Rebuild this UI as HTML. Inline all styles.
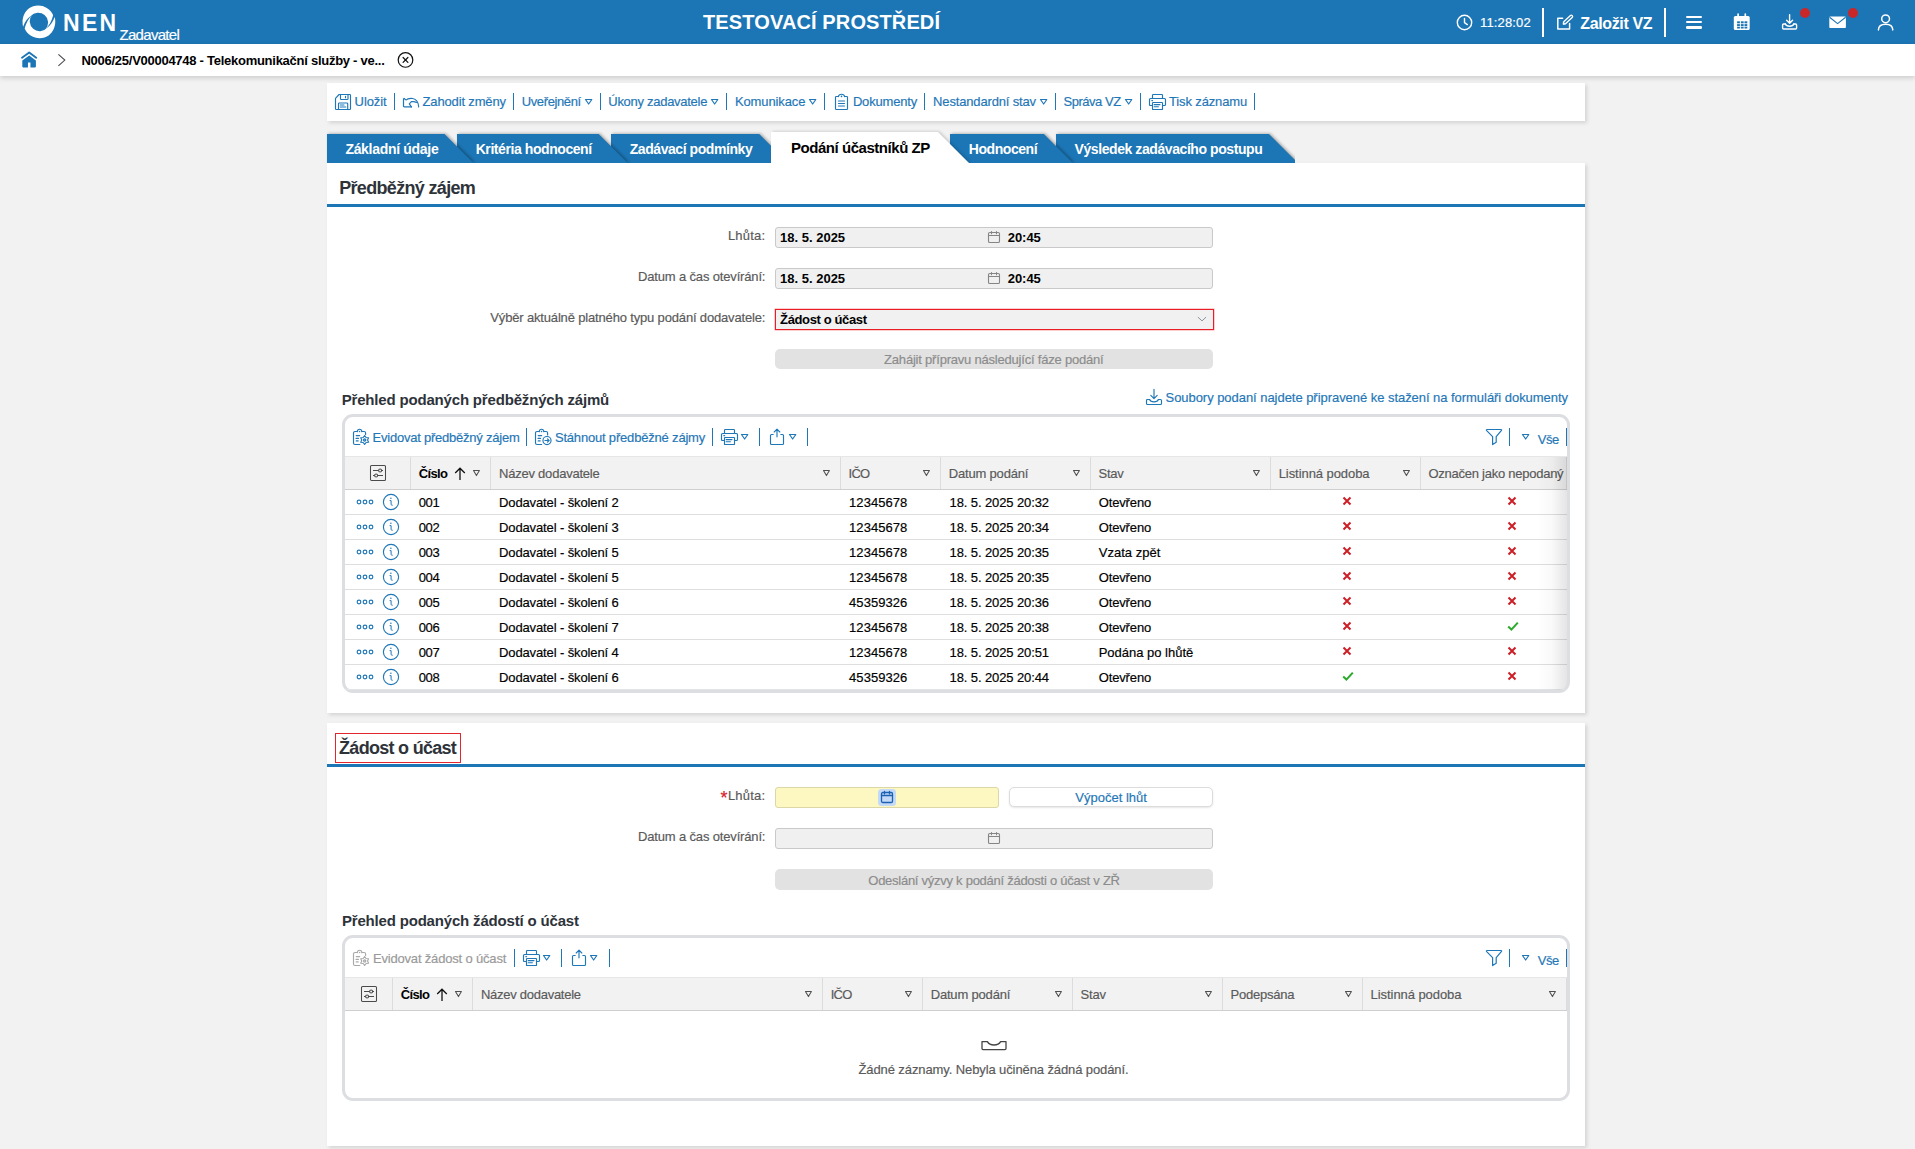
<!DOCTYPE html>
<html lang="cs"><head><meta charset="utf-8"><title>NEN - Zadavatel</title>
<style>
html,body{margin:0;padding:0}
body{width:1915px;height:1149px;overflow:hidden;position:relative;background:#f2f2f2;font-family:"Liberation Sans", sans-serif;font-size:13px;color:#000}
.b{position:absolute;display:block;box-sizing:border-box}
.t{position:absolute;white-space:nowrap;display:block}
</style></head><body>
<header>
<div class="b" style="left:0px;top:0px;width:1915px;height:44px;background:#1c75b4;"></div>
<svg class="b" style="left:22px;top:5px;" width="34" height="34" viewBox="22 5 34 34"><path d="M23.1 26.8 C21.4 20 23.6 12.6 28.8 8.6 C34 4.6 41.6 4.7 46.8 8 C49.8 9.9 52.2 12.4 53.1 15.3 Q51.4 23.2 45.7 28.9 A9.1 9.1 0 1 0 30.7 16.1 Q25.7 19.35 23.1 26.8Z" fill="#fff"/><path d="M23.1 26.8 C21.4 20 23.6 12.6 28.8 8.6 C34 4.6 41.6 4.7 46.8 8 C49.8 9.9 52.2 12.4 53.1 15.3 Q51.4 23.2 45.7 28.9 A9.1 9.1 0 1 0 30.7 16.1 Q25.7 19.35 23.1 26.8Z" fill="#fff" transform="rotate(180 38.9 21.9)"/></svg>
<span id="t1" class="t" style="left:63.10px;top:9.01px;font-size:23px;line-height:28px;font-weight:700;color:#fff;letter-spacing:2.213px;">NEN</span>
<span id="t2" class="t" style="left:119.50px;top:26.00px;font-size:15px;line-height:18px;-webkit-text-stroke:0.18px;color:#fff;letter-spacing:-0.697px;">Zadavatel</span>
<span id="t3" class="t" style="left:703.00px;top:10.00px;font-size:20px;line-height:24px;font-weight:700;color:#fff;letter-spacing:0.119px;">TESTOVACÍ PROSTŘEDÍ</span>
<svg class="b" style="left:1456px;top:14px;" width="17" height="17" viewBox="0 0 17 17"><g fill="none" stroke="#fff" stroke-width="1.4" stroke-linecap="round" stroke-linejoin="round"><circle cx="8.5" cy="8.5" r="7.2"/><path d="M8.5 4.4V8.7L11.3 10.6"/></g></svg>
<span id="t4" class="t" style="left:1480.00px;top:14.01px;font-size:13px;line-height:18px;-webkit-text-stroke:0.18px;color:#fff;letter-spacing:0.145px;">11:28:02</span>
<div class="b" style="left:1542px;top:8px;width:2px;height:29px;background:#fff;"></div>
<svg class="b" style="left:1555.5px;top:13px;overflow:visible;" width="18" height="18" viewBox="0 0 18 18"><path d="M6.6 5.2H1.8V16H13.6V10.6" fill="none" stroke="#fff" stroke-width="1.5" stroke-linejoin="round" stroke-linecap="round"/><path d="M7 11.4L7.5 8.9L9.5 10.9Z" fill="#fff" stroke="#fff" stroke-width="0.8" stroke-linejoin="round"/><path d="M8.9 9.5L15.3 3.5" stroke="#fff" stroke-width="3.9" stroke-linecap="round"/><path d="M8.9 9.5L15.3 3.5" stroke="#1c75b4" stroke-width="1.2" stroke-linecap="round"/></svg>
<span id="t5" class="t" style="left:1580.30px;top:14.01px;font-size:16px;line-height:20px;font-weight:700;color:#fff;letter-spacing:-0.376px;">Založit VZ</span>
<div class="b" style="left:1664px;top:8px;width:2px;height:29px;background:#fff;"></div>
<div class="b" style="left:1686px;top:15.8px;width:16px;height:2.6px;background:#fff;border-radius:1.2px;"></div>
<div class="b" style="left:1686px;top:20.9px;width:16px;height:2.6px;background:#fff;border-radius:1.2px;"></div>
<div class="b" style="left:1686px;top:26px;width:16px;height:2.6px;background:#fff;border-radius:1.2px;"></div>
<svg class="b" style="left:1733px;top:13px;" width="18" height="18" viewBox="0 0 18 18"><rect x="0.8" y="3" width="15.9" height="14" rx="1.6" fill="#fff"/><path d="M5.1 1V4.4M12.3 1V4.4" stroke="#fff" stroke-width="1.7" stroke-linecap="round"/><g fill="#1c75b4"><rect x="4.1" y="8.3" width="2.8" height="2"/><rect x="4.1" y="11.1" width="2.8" height="1.9"/><rect x="4.1" y="13.7" width="2.8" height="1.8"/><rect x="7.85" y="8.3" width="2.8" height="2"/><rect x="7.85" y="11.1" width="2.8" height="1.9"/><rect x="7.85" y="13.7" width="2.8" height="1.8"/><rect x="11.5" y="8.3" width="2.8" height="2"/><rect x="11.5" y="11.1" width="2.8" height="1.9"/><rect x="11.5" y="13.7" width="2.8" height="1.8"/></g></svg>
<svg class="b" style="left:1781px;top:13px;" width="18" height="18" viewBox="0 0 18 18"><g fill="none" stroke="#fff" stroke-width="1.4" stroke-linejoin="round" stroke-linecap="round"><path d="M8.6 1.6V10M5.6 7.2L8.6 10.2L11.6 7.2"/><path d="M4.4 11H2.6Q1.6 11 1.6 12V15Q1.6 16 2.6 16H14.6Q15.6 16 15.6 15V12Q15.6 11 14.6 11H12.8"/><path d="M4.4 11Q5.2 13.2 8.6 13.2Q12 13.2 12.8 11"/></g></svg>
<div class="b" style="left:1800px;top:8.4px;width:10px;height:10px;background:#ca272b;border-radius:50%;"></div>
<svg class="b" style="left:1829px;top:16px;" width="18" height="13" viewBox="0 0 18 13"><rect x="0.3" y="0.5" width="16.6" height="11.6" rx="1.2" fill="#fff"/><path d="M0.6 1.2L8.6 7.6L16.6 1.2" fill="none" stroke="#1c75b4" stroke-width="1.1"/></svg>
<div class="b" style="left:1848px;top:8.4px;width:10px;height:10px;background:#ca272b;border-radius:50%;"></div>
<svg class="b" style="left:1877px;top:13px;" width="18" height="18" viewBox="0 0 18 18"><g fill="none" stroke="#fff" stroke-width="1.5" stroke-linecap="round"><circle cx="8.6" cy="5.8" r="3.9"/><path d="M1.4 16.9Q1.6 11.2 8.6 11.2Q15.6 11.2 15.8 16.9"/></g></svg>
</header>
<nav aria-label="breadcrumb">
<div class="b" style="left:0px;top:44px;width:1915px;height:32px;background:#fff;box-shadow:0 2px 5px rgba(0,0,0,.16);"></div>
<svg class="b" style="left:20px;top:51px;overflow:visible;" width="18" height="18" viewBox="0 0 18 18"><path d="M2 6.7L9.2 1.5L16.2 6.7" fill="none" stroke="#1c75b4" stroke-width="1.9" stroke-linecap="round" stroke-linejoin="round"/><path d="M9.2 4.5L15.9 9.5V15.6Q15.9 16.4 15.1 16.4H10.45V11.4H7.95V16.4H3.1Q2.3 16.4 2.3 15.6V9.5Z" fill="#1c75b4"/></svg>
<svg class="b" style="left:57px;top:53px;" width="10" height="14" viewBox="0 0 10 14"><path d="M1.4 1.3L7.8 7.1L1.4 12.9" fill="none" stroke="#4a4a52" stroke-width="1.1"/></svg>
<span id="t6" class="t" style="left:81.50px;top:52.01px;font-size:13px;line-height:17px;font-weight:700;letter-spacing:-0.265px;">N006/25/V00004748 - Telekomunikační služby - ve...</span>
<svg class="b" style="left:396px;top:51px;overflow:visible;" width="18" height="18" viewBox="0 0 18 18"><g fill="none" stroke="#111" stroke-width="1.2" stroke-linecap="round"><circle cx="9.5" cy="8.95" r="7.3"/><path d="M7.1 6.5L11.9 11.4M11.9 6.5L7.1 11.4"/></g></svg>
</nav>
<main>
<div role="toolbar">
<div class="b" style="left:327px;top:83px;width:1258px;height:38px;background:#fff;box-shadow:2px 2px 4px rgba(0,0,0,.13);"></div>
<svg class="b" style="left:334px;top:93px;overflow:visible;" width="18" height="18" viewBox="0 0 18 18"><g fill="none" stroke="#1f77b7" stroke-width="1.15" stroke-linejoin="round" stroke-linecap="round"><path d="M1.5 5.3L5.1 1.5H15.7Q16.5 1.5 16.5 2.3V15.7Q16.5 16.5 15.7 16.5H2.3Q1.5 16.5 1.5 15.7Z"/><path d="M6.5 1.7V5.7Q6.5 6.5 7.3 6.5H13.2Q14 6.5 14 5.7V1.7M11.5 3.4V4.7"/><path d="M4.5 16.3V10.8Q4.5 10 5.3 10H12.9Q13.7 10 13.7 10.8V16.3"/><path d="M6.3 12H10M6.3 14H11.8"/></g></svg>
<span id="t7" class="t" style="left:354.60px;top:93.01px;font-size:13px;line-height:17px;-webkit-text-stroke:0.18px;color:#1f77b7;letter-spacing:-0.086px;">Uložit</span>
<div class="b" style="left:394px;top:93px;width:1.25px;height:17px;background:#1f77b7;"></div>
<svg class="b" style="left:402px;top:93px;overflow:visible;" width="18" height="18" viewBox="0 0 18 18"><g fill="none" stroke="#1f77b7" stroke-width="1.2" stroke-linejoin="round" stroke-linecap="round"><path d="M9.4 13.9H2.4Q1.5 13.9 1.5 13V6.3Q1.5 5.3 2.4 5.5Q3.1 6.9 4.2 6.9Q5.2 6.9 5.8 5.8Q8.4 5.2 10.6 5.5C14.6 6.2 16.4 9.6 16.7 13.9"/><path d="M9.4 13.9L7.3 10.9L9.4 8.7Q12.4 8.2 14.4 9.4"/></g></svg>
<span id="t8" class="t" style="left:422.50px;top:93.01px;font-size:13px;line-height:17px;-webkit-text-stroke:0.18px;color:#1f77b7;letter-spacing:-0.144px;">Zahodit změny</span>
<div class="b" style="left:513px;top:93px;width:1.25px;height:17px;background:#1f77b7;"></div>
<span id="t9" class="t" style="left:521.70px;top:93.01px;font-size:13px;line-height:17px;-webkit-text-stroke:0.18px;color:#1f77b7;letter-spacing:-0.377px;">Uveřejnění</span>
<svg class="b" style="left:584px;top:98px;overflow:visible;" width="12" height="12" viewBox="0 0 12 12"><path d="M1.5 1.5H7.8 L4.65 6Z" fill="none" stroke="#1f77b7" stroke-width="1.2" stroke-linejoin="round"/></svg>
<div class="b" style="left:600px;top:93px;width:1.25px;height:17px;background:#1f77b7;"></div>
<span id="t10" class="t" style="left:608.30px;top:93.01px;font-size:13px;line-height:17px;-webkit-text-stroke:0.18px;color:#1f77b7;letter-spacing:-0.284px;">Úkony zadavatele</span>
<svg class="b" style="left:710px;top:98px;overflow:visible;" width="12" height="12" viewBox="0 0 12 12"><path d="M1.5 1.5H7.8 L4.65 6Z" fill="none" stroke="#1f77b7" stroke-width="1.2" stroke-linejoin="round"/></svg>
<div class="b" style="left:726px;top:93px;width:1.25px;height:17px;background:#1f77b7;"></div>
<span id="t11" class="t" style="left:734.90px;top:93.01px;font-size:13px;line-height:17px;-webkit-text-stroke:0.18px;color:#1f77b7;letter-spacing:-0.105px;">Komunikace</span>
<svg class="b" style="left:808px;top:98px;overflow:visible;" width="12" height="12" viewBox="0 0 12 12"><path d="M1.5 1.5H7.8 L4.65 6Z" fill="none" stroke="#1f77b7" stroke-width="1.2" stroke-linejoin="round"/></svg>
<div class="b" style="left:824px;top:93px;width:1.25px;height:17px;background:#1f77b7;"></div>
<svg class="b" style="left:833px;top:93px;overflow:visible;" width="17" height="18" viewBox="0 0 17 18"><g fill="none" stroke="#1f77b7" stroke-width="1.15" stroke-linejoin="round" stroke-linecap="round"><path d="M5.2 3.5H3.3Q2.5 3.5 2.5 4.3V15.7Q2.5 16.5 3.3 16.5H13.7Q14.5 16.5 14.5 15.7V4.3Q14.5 3.5 13.7 3.5H11.8"/><path d="M5.4 3.6Q5.8 1.2 8.5 1.2Q11.2 1.2 11.6 3.6"/><path d="M5.5 8H11.5M5.5 10.5H11.5M5.5 13H11.5"/></g><circle cx="8.5" cy="3.4" r="0.8" fill="#1f77b7"/></svg>
<span id="t12" class="t" style="left:852.90px;top:93.01px;font-size:13px;line-height:17px;-webkit-text-stroke:0.18px;color:#1f77b7;letter-spacing:-0.172px;">Dokumenty</span>
<div class="b" style="left:924px;top:93px;width:1.25px;height:17px;background:#1f77b7;"></div>
<span id="t13" class="t" style="left:933.10px;top:93.01px;font-size:13px;line-height:17px;-webkit-text-stroke:0.18px;color:#1f77b7;letter-spacing:-0.160px;">Nestandardní stav</span>
<svg class="b" style="left:1039px;top:98px;overflow:visible;" width="12" height="12" viewBox="0 0 12 12"><path d="M1.5 1.5H7.8 L4.65 6Z" fill="none" stroke="#1f77b7" stroke-width="1.2" stroke-linejoin="round"/></svg>
<div class="b" style="left:1055px;top:93px;width:1.25px;height:17px;background:#1f77b7;"></div>
<span id="t14" class="t" style="left:1063.50px;top:93.01px;font-size:13px;line-height:17px;-webkit-text-stroke:0.18px;color:#1f77b7;letter-spacing:-0.469px;">Správa VZ</span>
<svg class="b" style="left:1124px;top:98px;overflow:visible;" width="12" height="12" viewBox="0 0 12 12"><path d="M1.5 1.5H7.8 L4.65 6Z" fill="none" stroke="#1f77b7" stroke-width="1.2" stroke-linejoin="round"/></svg>
<div class="b" style="left:1140px;top:93px;width:1.25px;height:17px;background:#1f77b7;"></div>
<svg class="b" style="left:1148px;top:93px;overflow:visible;" width="18" height="18" viewBox="0 0 18 18"><g fill="none" stroke="#1f77b7" stroke-width="1.15" stroke-linejoin="round" stroke-linecap="round"><path d="M4.5 5.3V2.3Q4.5 1.5 5.3 1.5H13.7Q14.5 1.5 14.5 2.3V5.3"/><path d="M4.5 12.5H2.5Q1.5 12.5 1.5 11.5V6.5Q1.5 5.5 2.5 5.5H16.5Q17.5 5.5 17.5 6.5V11.5Q17.5 12.5 16.5 12.5H14.5"/><rect x="4.5" y="9.5" width="10" height="7" rx="0.6"/><path d="M6.2 11.6H12M6.2 13.7H10.4M3.8 7.6H4.6"/></g></svg>
<span id="t15" class="t" style="left:1169.00px;top:93.01px;font-size:13px;line-height:17px;-webkit-text-stroke:0.18px;color:#1f77b7;letter-spacing:-0.135px;">Tisk záznamu</span>
<div class="b" style="left:1254px;top:93px;width:1.25px;height:17px;background:#1f77b7;"></div>
</div>
<section>
<div class="b" style="left:327px;top:163px;width:1258px;height:550px;background:#fff;box-shadow:2px 2px 4px rgba(0,0,0,.13);"></div>
<span id="t16" class="t" style="left:339.20px;top:176.01px;font-size:18px;line-height:24px;font-weight:700;color:#2e333a;letter-spacing:-0.671px;">Předběžný zájem</span>
<div class="b" style="left:327px;top:204px;width:1258px;height:3px;background:#1c75b4;"></div>
<span id="t17" class="t" style="left:727.90px;top:227.01px;font-size:13px;line-height:17px;-webkit-text-stroke:0.18px;color:#5a5a5a;letter-spacing:0.207px;">Lhůta:</span>
<div class="b" style="left:775px;top:227px;width:438px;height:21px;background:#f0f0f0;border:1px solid #c9c9c9;border-radius:3px;"></div>
<span id="t18" class="t" style="left:780.10px;top:229.01px;font-size:13px;line-height:17px;font-weight:700;letter-spacing:-0.006px;">18. 5. 2025</span>
<svg class="b" style="left:987px;top:230px;overflow:visible;" width="14" height="14" viewBox="0 0 14 14"><g fill="none" stroke="#858585" stroke-width="1.1" stroke-linejoin="round" stroke-linecap="round"><rect x="1.5" y="2.5" width="11" height="10" rx="1.3"/><path d="M1.5 5.5H12.5M4.5 1.5V3.8M9.5 1.5V3.8"/></g></svg>
<span id="t19" class="t" style="left:1007.70px;top:229.01px;font-size:13px;line-height:17px;font-weight:700;letter-spacing:-0.030px;">20:45</span>
<span id="t20" class="t" style="left:638.00px;top:268.01px;font-size:13px;line-height:17px;-webkit-text-stroke:0.18px;color:#5a5a5a;letter-spacing:-0.158px;">Datum a čas otevírání:</span>
<div class="b" style="left:775px;top:268px;width:438px;height:21px;background:#f0f0f0;border:1px solid #c9c9c9;border-radius:3px;"></div>
<span id="t21" class="t" style="left:780.10px;top:270.01px;font-size:13px;line-height:17px;font-weight:700;letter-spacing:-0.006px;">18. 5. 2025</span>
<svg class="b" style="left:987px;top:271px;overflow:visible;" width="14" height="14" viewBox="0 0 14 14"><g fill="none" stroke="#858585" stroke-width="1.1" stroke-linejoin="round" stroke-linecap="round"><rect x="1.5" y="2.5" width="11" height="10" rx="1.3"/><path d="M1.5 5.5H12.5M4.5 1.5V3.8M9.5 1.5V3.8"/></g></svg>
<span id="t22" class="t" style="left:1007.70px;top:270.01px;font-size:13px;line-height:17px;font-weight:700;letter-spacing:-0.030px;">20:45</span>
<span id="t23" class="t" style="left:490.30px;top:309.01px;font-size:13px;line-height:17px;-webkit-text-stroke:0.18px;color:#5a5a5a;letter-spacing:-0.162px;">Výběr aktuálně platného typu podání dodavatele:</span>
<div class="b" style="left:775px;top:309px;width:439px;height:21px;background:#f1f1f1;border:1px solid #ea1c25;box-shadow:0 0 0 0.4px rgba(234,28,37,.55);"></div>
<span id="t24" class="t" style="left:780.10px;top:311.01px;font-size:13px;line-height:17px;font-weight:700;letter-spacing:-0.375px;">Žádost o účast</span>
<svg class="b" style="left:1196px;top:315px;overflow:visible;" width="12" height="8" viewBox="0 0 12 8"><path d="M1.9 2.1L6 5.9L10.1 2.1" fill="none" stroke="#8b939c" stroke-width="1"/></svg>
<div class="b" style="left:775px;top:349px;width:438px;height:20px;background:#e2e2e2;border-radius:5px;"></div>
<span id="t25" class="t" style="left:884.10px;top:351.01px;font-size:13px;line-height:17px;-webkit-text-stroke:0.18px;color:#8c8c8c;letter-spacing:-0.206px;">Zahájit přípravu následující fáze podání</span>
<span id="t26" class="t" style="left:341.70px;top:390.00px;font-size:15px;line-height:20px;font-weight:700;color:#2e333a;letter-spacing:-0.177px;">Přehled podaných předběžných zájmů</span>
<svg class="b" style="left:1145px;top:388px;overflow:visible;" width="18" height="18" viewBox="0 0 18 18"><g fill="none" stroke="#1f77b7" stroke-width="1.15" stroke-linejoin="round" stroke-linecap="round"><path d="M9 1.4V10.4M5.8 7.4L9 10.6L12.2 7.4"/><path d="M4.6 11.5H2.5Q1.5 11.5 1.5 12.5V15.5Q1.5 16.5 2.5 16.5H15.5Q16.5 16.5 16.5 15.5V12.5Q16.5 11.5 15.5 11.5H13.4"/><path d="M4.6 11.5Q5.4 13.8 9 13.8Q12.6 13.8 13.4 11.5"/></g></svg>
<span id="t27" class="t" style="left:1165.50px;top:389.01px;font-size:13px;line-height:17px;-webkit-text-stroke:0.18px;color:#1f77b7;letter-spacing:-0.044px;">Soubory podaní najdete připravené ke stažení na formuláři dokumenty</span>
<div class="b" style="left:342px;top:414px;width:1228px;height:279px;border:3px solid #dcdee1;border-radius:11px;background:#fff;"></div>
<svg class="b" style="left:352px;top:428px;overflow:visible;" width="18" height="18" viewBox="0 0 18 18"><g fill="none" stroke="#1f77b7" stroke-width="1.15" stroke-linejoin="round" stroke-linecap="round"><path d="M5.2 3.5H3Q1.5 3.5 1.5 5V15Q1.5 16.5 3 16.5H7.8"/><path d="M9.9 3.5H12.1Q13.6 3.5 13.6 5V6.4"/><path d="M5.2 3.6Q5.4 1.2 7.55 1.2Q9.7 1.2 9.9 3.6"/><path d="M4.3 7.6H7.6M4.1 10.4H6.4M4.3 12.9H6.1" stroke-width="1.3"/><circle cx="12.65" cy="12" r="1.1" stroke-width="1.3"/><path d="M12.65 7.50L14.10 9.49L16.55 9.75L15.55 12.00L16.55 14.25L14.10 14.51L12.65 16.50L11.20 14.51L8.75 14.25L9.75 12.00L8.75 9.75L11.20 9.49Z"/></g><circle cx="7.55" cy="3.5" r="0.75" fill="#1f77b7"/></svg>
<span id="t28" class="t" style="left:372.60px;top:429.01px;font-size:13px;line-height:17px;-webkit-text-stroke:0.18px;color:#1f77b7;letter-spacing:-0.233px;">Evidovat předběžný zájem</span>
<div class="b" style="left:526px;top:428px;width:1.25px;height:18px;background:#1f77b7;"></div>
<svg class="b" style="left:534px;top:428px;overflow:visible;" width="18" height="18" viewBox="0 0 18 18"><g fill="none" stroke="#1f77b7" stroke-width="1.15" stroke-linejoin="round" stroke-linecap="round"><path d="M5.2 3.5H3Q1.5 3.5 1.5 5V15Q1.5 16.5 3 16.5H7.6"/><path d="M9.9 3.5H12.1Q13.6 3.5 13.6 5V7"/><path d="M5.2 3.6Q5.4 1.2 7.55 1.2Q9.7 1.2 9.9 3.6"/><path d="M4.3 7.6H7.6M4.1 10.4H6.4M4.3 12.9H6.1" stroke-width="1.3"/><circle cx="13" cy="12.5" r="4.05"/><path d="M10.9 12.5H15M13.5 10.9L15.1 12.5L13.5 14.1"/></g><circle cx="7.55" cy="3.5" r="0.75" fill="#1f77b7"/></svg>
<span id="t29" class="t" style="left:554.90px;top:429.01px;font-size:13px;line-height:17px;-webkit-text-stroke:0.18px;color:#1f77b7;letter-spacing:-0.186px;">Stáhnout předběžné zájmy</span>
<div class="b" style="left:712px;top:428px;width:1.25px;height:18px;background:#1f77b7;"></div>
<svg class="b" style="left:720px;top:428px;overflow:visible;" width="18" height="18" viewBox="0 0 18 18"><g fill="none" stroke="#1f77b7" stroke-width="1.15" stroke-linejoin="round" stroke-linecap="round"><path d="M4.5 5.3V2.3Q4.5 1.5 5.3 1.5H13.7Q14.5 1.5 14.5 2.3V5.3"/><path d="M4.5 12.5H2.5Q1.5 12.5 1.5 11.5V6.5Q1.5 5.5 2.5 5.5H16.5Q17.5 5.5 17.5 6.5V11.5Q17.5 12.5 16.5 12.5H14.5"/><rect x="4.5" y="9.5" width="10" height="7" rx="0.6"/><path d="M6.2 11.6H12M6.2 13.7H10.4M3.8 7.6H4.6"/></g></svg>
<svg class="b" style="left:740px;top:433px;overflow:visible;" width="12" height="12" viewBox="0 0 12 12"><path d="M1.5 1.5H7.8 L4.65 6Z" fill="none" stroke="#1f77b7" stroke-width="1.2" stroke-linejoin="round"/></svg>
<div class="b" style="left:759px;top:428px;width:1.25px;height:18px;background:#1f77b7;"></div>
<svg class="b" style="left:768px;top:428px;overflow:visible;" width="18" height="18" viewBox="0 0 18 18"><g fill="none" stroke="#1f77b7" stroke-width="1.15" stroke-linejoin="round" stroke-linecap="round"><path d="M5.2 6.5H3.5Q2.5 6.5 2.5 7.5V15.5Q2.5 16.5 3.5 16.5H14.5Q15.5 16.5 15.5 15.5V7.5Q15.5 6.5 14.5 6.5H12.8"/><path d="M9 8.8V1.4M6.2 4L9 1.2L11.8 4"/></g></svg>
<svg class="b" style="left:788px;top:433px;overflow:visible;" width="12" height="12" viewBox="0 0 12 12"><path d="M1.5 1.5H7.8 L4.65 6Z" fill="none" stroke="#1f77b7" stroke-width="1.2" stroke-linejoin="round"/></svg>
<div class="b" style="left:807px;top:428px;width:1.25px;height:18px;background:#1f77b7;"></div>
<svg class="b" style="left:1485px;top:428px;overflow:visible;" width="18" height="18" viewBox="0 0 18 18"><path d="M2.2 1.5H15.8Q17.2 1.5 16.3 2.6L11.2 8.6V14.3L7.6 16.6V8.6L1.7 2.6Q0.8 1.5 2.2 1.5Z" fill="none" stroke="#1f77b7" stroke-width="1.2" stroke-linejoin="round"/></svg>
<div class="b" style="left:1509px;top:428px;width:1.25px;height:18px;background:#1f77b7;"></div>
<svg class="b" style="left:1521px;top:433px;overflow:visible;" width="12" height="12" viewBox="0 0 12 12"><path d="M1.5 1.5H7.8 L4.65 6Z" fill="none" stroke="#1f77b7" stroke-width="1.2" stroke-linejoin="round"/></svg>
<span id="t30" class="t" style="left:1537.70px;top:431.01px;font-size:13px;line-height:17px;-webkit-text-stroke:0.18px;color:#1f77b7;letter-spacing:-0.369px;">Vše</span>
<div class="b" style="left:1566px;top:428px;width:1.25px;height:18px;background:#1f77b7;"></div>
<div class="b" style="left:345px;top:456px;width:1222px;height:1px;background:#e6e6e6;"></div>
<div class="b" style="left:345px;top:457px;width:1222px;height:32px;background:#f2f2f2;"></div>
<div class="b" style="left:345px;top:489px;width:1222px;height:1px;background:#cfcfcf;"></div>
<div class="b" style="left:410px;top:457px;width:1px;height:32px;background:#dcdcdc;"></div>
<div class="b" style="left:490px;top:457px;width:1px;height:32px;background:#dcdcdc;"></div>
<div class="b" style="left:840px;top:457px;width:1px;height:32px;background:#dcdcdc;"></div>
<div class="b" style="left:940px;top:457px;width:1px;height:32px;background:#dcdcdc;"></div>
<div class="b" style="left:1090px;top:457px;width:1px;height:32px;background:#dcdcdc;"></div>
<div class="b" style="left:1270px;top:457px;width:1px;height:32px;background:#dcdcdc;"></div>
<div class="b" style="left:1420px;top:457px;width:1px;height:32px;background:#dcdcdc;"></div>
<div class="b" style="left:1566px;top:457px;width:1px;height:32px;background:#dcdcdc;"></div>
<svg class="b" style="left:369px;top:464px;overflow:visible;" width="18" height="18" viewBox="0 0 18 18"><g fill="none" stroke="#4a4a4a" stroke-width="1.05"><rect x="1.5" y="1.5" width="15" height="15" rx="1"/><path d="M4 6.5H9.6M12.6 6.5H14M4 11.5H5.6M8.6 11.5H14"/><circle cx="11.1" cy="6.5" r="1.5"/><circle cx="7.1" cy="11.5" r="1.5"/></g></svg>
<span id="t31" class="t" style="left:418.70px;top:465.01px;font-size:13px;line-height:17px;font-weight:700;letter-spacing:-0.639px;">Číslo</span>
<svg class="b" style="left:453px;top:465.6px;" width="14" height="16" viewBox="0 0 14 16"><path d="M7 14V2.4M2.2 7L7 2.2L11.8 7" fill="none" stroke="#111" stroke-width="1.3"/></svg>
<svg class="b" style="left:472px;top:469px;overflow:visible;" width="12" height="12" viewBox="0 0 12 12"><path d="M1.5 1.5H7.4 L4.45 6.6Z" fill="none" stroke="#505050" stroke-width="1.05" stroke-linejoin="round"/></svg>
<span id="t32" class="t" style="left:499.00px;top:465.01px;font-size:13px;line-height:17px;-webkit-text-stroke:0.18px;color:#5a5a5a;letter-spacing:-0.224px;">Název dodavatele</span>
<svg class="b" style="left:822px;top:469px;overflow:visible;" width="12" height="12" viewBox="0 0 12 12"><path d="M1.5 1.5H7.4 L4.45 6.6Z" fill="none" stroke="#505050" stroke-width="1.05" stroke-linejoin="round"/></svg>
<span id="t33" class="t" style="left:848.50px;top:465.01px;font-size:13px;line-height:17px;-webkit-text-stroke:0.18px;color:#5a5a5a;letter-spacing:-0.708px;">IČO</span>
<svg class="b" style="left:922px;top:469px;overflow:visible;" width="12" height="12" viewBox="0 0 12 12"><path d="M1.5 1.5H7.4 L4.45 6.6Z" fill="none" stroke="#505050" stroke-width="1.05" stroke-linejoin="round"/></svg>
<span id="t34" class="t" style="left:948.70px;top:465.01px;font-size:13px;line-height:17px;-webkit-text-stroke:0.18px;color:#5a5a5a;letter-spacing:-0.173px;">Datum podání</span>
<svg class="b" style="left:1072px;top:469px;overflow:visible;" width="12" height="12" viewBox="0 0 12 12"><path d="M1.5 1.5H7.4 L4.45 6.6Z" fill="none" stroke="#505050" stroke-width="1.05" stroke-linejoin="round"/></svg>
<span id="t35" class="t" style="left:1098.50px;top:465.01px;font-size:13px;line-height:17px;-webkit-text-stroke:0.18px;color:#5a5a5a;letter-spacing:-0.254px;">Stav</span>
<svg class="b" style="left:1252px;top:469px;overflow:visible;" width="12" height="12" viewBox="0 0 12 12"><path d="M1.5 1.5H7.4 L4.45 6.6Z" fill="none" stroke="#505050" stroke-width="1.05" stroke-linejoin="round"/></svg>
<span id="t36" class="t" style="left:1278.70px;top:465.01px;font-size:13px;line-height:17px;-webkit-text-stroke:0.18px;color:#5a5a5a;letter-spacing:-0.067px;">Listinná podoba</span>
<svg class="b" style="left:1402px;top:469px;overflow:visible;" width="12" height="12" viewBox="0 0 12 12"><path d="M1.5 1.5H7.4 L4.45 6.6Z" fill="none" stroke="#505050" stroke-width="1.05" stroke-linejoin="round"/></svg>
<span id="t37" class="t" style="left:1428.40px;top:465.01px;font-size:13px;line-height:17px;-webkit-text-stroke:0.18px;color:#5a5a5a;letter-spacing:-0.249px;">Označen jako nepodaný</span>
<div class="b" style="left:345px;top:514px;width:1222px;height:1px;background:#dedede;"></div>
<svg class="b" style="left:356px;top:499px;overflow:visible;" width="18" height="6" viewBox="0 0 18 6"><g fill="none" stroke="#1f77b7" stroke-width="1.15"><circle cx="3" cy="3" r="1.85"/><circle cx="9" cy="3" r="1.85"/><circle cx="15" cy="3" r="1.85"/></g></svg>
<svg class="b" style="left:382px;top:493px;overflow:visible;" width="18" height="18" viewBox="0 0 18 18"><g fill="none" stroke="#1f77b7" stroke-width="1.15" stroke-linejoin="round" stroke-linecap="round"><circle cx="9" cy="9" r="7.6"/><path d="M8 7.6H9.1V11.3Q9.1 12.5 10.3 12.3" stroke-width="1"/></g><circle cx="8.9" cy="5.2" r="0.75" fill="#1f77b7"/></svg>
<span id="t38" class="t" style="left:418.70px;top:494.01px;font-size:13px;line-height:17px;-webkit-text-stroke:0.18px;letter-spacing:-0.334px;">001</span>
<span id="t39" class="t" style="left:499.00px;top:494.01px;font-size:13px;line-height:17px;-webkit-text-stroke:0.18px;letter-spacing:-0.115px;">Dodavatel - školení 2</span>
<span id="t40" class="t" style="left:849.10px;top:494.01px;font-size:13px;line-height:17px;-webkit-text-stroke:0.18px;letter-spacing:0.045px;">12345678</span>
<span id="t41" class="t" style="left:949.50px;top:494.01px;font-size:13px;line-height:17px;-webkit-text-stroke:0.18px;letter-spacing:-0.100px;">18. 5. 2025 20:32</span>
<span id="t42" class="t" style="left:1098.70px;top:494.01px;font-size:13px;line-height:17px;-webkit-text-stroke:0.18px;letter-spacing:-0.136px;">Otevřeno</span>
<svg class="b" style="left:1340.8px;top:495.15px;" width="12" height="12" viewBox="0 0 12 12"><path d="M2.5 2.5L9.5 9.5M9.5 2.5L2.5 9.5" stroke="#cc1f26" stroke-width="2" fill="none"/></svg>
<svg class="b" style="left:1505.8px;top:495.15px;" width="12" height="12" viewBox="0 0 12 12"><path d="M2.5 2.5L9.5 9.5M9.5 2.5L2.5 9.5" stroke="#cc1f26" stroke-width="2" fill="none"/></svg>
<div class="b" style="left:345px;top:539px;width:1222px;height:1px;background:#dedede;"></div>
<svg class="b" style="left:356px;top:524px;overflow:visible;" width="18" height="6" viewBox="0 0 18 6"><g fill="none" stroke="#1f77b7" stroke-width="1.15"><circle cx="3" cy="3" r="1.85"/><circle cx="9" cy="3" r="1.85"/><circle cx="15" cy="3" r="1.85"/></g></svg>
<svg class="b" style="left:382px;top:518px;overflow:visible;" width="18" height="18" viewBox="0 0 18 18"><g fill="none" stroke="#1f77b7" stroke-width="1.15" stroke-linejoin="round" stroke-linecap="round"><circle cx="9" cy="9" r="7.6"/><path d="M8 7.6H9.1V11.3Q9.1 12.5 10.3 12.3" stroke-width="1"/></g><circle cx="8.9" cy="5.2" r="0.75" fill="#1f77b7"/></svg>
<span id="t43" class="t" style="left:418.70px;top:519.01px;font-size:13px;line-height:17px;-webkit-text-stroke:0.18px;letter-spacing:-0.334px;">002</span>
<span id="t44" class="t" style="left:499.00px;top:519.01px;font-size:13px;line-height:17px;-webkit-text-stroke:0.18px;letter-spacing:-0.115px;">Dodavatel - školení 3</span>
<span id="t45" class="t" style="left:849.10px;top:519.01px;font-size:13px;line-height:17px;-webkit-text-stroke:0.18px;letter-spacing:0.045px;">12345678</span>
<span id="t46" class="t" style="left:949.50px;top:519.01px;font-size:13px;line-height:17px;-webkit-text-stroke:0.18px;letter-spacing:-0.100px;">18. 5. 2025 20:34</span>
<span id="t47" class="t" style="left:1098.70px;top:519.01px;font-size:13px;line-height:17px;-webkit-text-stroke:0.18px;letter-spacing:-0.136px;">Otevřeno</span>
<svg class="b" style="left:1340.8px;top:520.15px;" width="12" height="12" viewBox="0 0 12 12"><path d="M2.5 2.5L9.5 9.5M9.5 2.5L2.5 9.5" stroke="#cc1f26" stroke-width="2" fill="none"/></svg>
<svg class="b" style="left:1505.8px;top:520.15px;" width="12" height="12" viewBox="0 0 12 12"><path d="M2.5 2.5L9.5 9.5M9.5 2.5L2.5 9.5" stroke="#cc1f26" stroke-width="2" fill="none"/></svg>
<div class="b" style="left:345px;top:564px;width:1222px;height:1px;background:#dedede;"></div>
<svg class="b" style="left:356px;top:549px;overflow:visible;" width="18" height="6" viewBox="0 0 18 6"><g fill="none" stroke="#1f77b7" stroke-width="1.15"><circle cx="3" cy="3" r="1.85"/><circle cx="9" cy="3" r="1.85"/><circle cx="15" cy="3" r="1.85"/></g></svg>
<svg class="b" style="left:382px;top:543px;overflow:visible;" width="18" height="18" viewBox="0 0 18 18"><g fill="none" stroke="#1f77b7" stroke-width="1.15" stroke-linejoin="round" stroke-linecap="round"><circle cx="9" cy="9" r="7.6"/><path d="M8 7.6H9.1V11.3Q9.1 12.5 10.3 12.3" stroke-width="1"/></g><circle cx="8.9" cy="5.2" r="0.75" fill="#1f77b7"/></svg>
<span id="t48" class="t" style="left:418.70px;top:544.01px;font-size:13px;line-height:17px;-webkit-text-stroke:0.18px;letter-spacing:-0.334px;">003</span>
<span id="t49" class="t" style="left:499.00px;top:544.01px;font-size:13px;line-height:17px;-webkit-text-stroke:0.18px;letter-spacing:-0.115px;">Dodavatel - školení 5</span>
<span id="t50" class="t" style="left:849.10px;top:544.01px;font-size:13px;line-height:17px;-webkit-text-stroke:0.18px;letter-spacing:0.045px;">12345678</span>
<span id="t51" class="t" style="left:949.50px;top:544.01px;font-size:13px;line-height:17px;-webkit-text-stroke:0.18px;letter-spacing:-0.100px;">18. 5. 2025 20:35</span>
<span id="t52" class="t" style="left:1098.70px;top:544.01px;font-size:13px;line-height:17px;-webkit-text-stroke:0.18px;letter-spacing:0.036px;">Vzata zpět</span>
<svg class="b" style="left:1340.8px;top:545.15px;" width="12" height="12" viewBox="0 0 12 12"><path d="M2.5 2.5L9.5 9.5M9.5 2.5L2.5 9.5" stroke="#cc1f26" stroke-width="2" fill="none"/></svg>
<svg class="b" style="left:1505.8px;top:545.15px;" width="12" height="12" viewBox="0 0 12 12"><path d="M2.5 2.5L9.5 9.5M9.5 2.5L2.5 9.5" stroke="#cc1f26" stroke-width="2" fill="none"/></svg>
<div class="b" style="left:345px;top:589px;width:1222px;height:1px;background:#dedede;"></div>
<svg class="b" style="left:356px;top:574px;overflow:visible;" width="18" height="6" viewBox="0 0 18 6"><g fill="none" stroke="#1f77b7" stroke-width="1.15"><circle cx="3" cy="3" r="1.85"/><circle cx="9" cy="3" r="1.85"/><circle cx="15" cy="3" r="1.85"/></g></svg>
<svg class="b" style="left:382px;top:568px;overflow:visible;" width="18" height="18" viewBox="0 0 18 18"><g fill="none" stroke="#1f77b7" stroke-width="1.15" stroke-linejoin="round" stroke-linecap="round"><circle cx="9" cy="9" r="7.6"/><path d="M8 7.6H9.1V11.3Q9.1 12.5 10.3 12.3" stroke-width="1"/></g><circle cx="8.9" cy="5.2" r="0.75" fill="#1f77b7"/></svg>
<span id="t53" class="t" style="left:418.70px;top:569.01px;font-size:13px;line-height:17px;-webkit-text-stroke:0.18px;letter-spacing:-0.334px;">004</span>
<span id="t54" class="t" style="left:499.00px;top:569.01px;font-size:13px;line-height:17px;-webkit-text-stroke:0.18px;letter-spacing:-0.115px;">Dodavatel - školení 5</span>
<span id="t55" class="t" style="left:849.10px;top:569.01px;font-size:13px;line-height:17px;-webkit-text-stroke:0.18px;letter-spacing:0.045px;">12345678</span>
<span id="t56" class="t" style="left:949.50px;top:569.01px;font-size:13px;line-height:17px;-webkit-text-stroke:0.18px;letter-spacing:-0.100px;">18. 5. 2025 20:35</span>
<span id="t57" class="t" style="left:1098.70px;top:569.01px;font-size:13px;line-height:17px;-webkit-text-stroke:0.18px;letter-spacing:-0.136px;">Otevřeno</span>
<svg class="b" style="left:1340.8px;top:570.15px;" width="12" height="12" viewBox="0 0 12 12"><path d="M2.5 2.5L9.5 9.5M9.5 2.5L2.5 9.5" stroke="#cc1f26" stroke-width="2" fill="none"/></svg>
<svg class="b" style="left:1505.8px;top:570.15px;" width="12" height="12" viewBox="0 0 12 12"><path d="M2.5 2.5L9.5 9.5M9.5 2.5L2.5 9.5" stroke="#cc1f26" stroke-width="2" fill="none"/></svg>
<div class="b" style="left:345px;top:614px;width:1222px;height:1px;background:#dedede;"></div>
<svg class="b" style="left:356px;top:599px;overflow:visible;" width="18" height="6" viewBox="0 0 18 6"><g fill="none" stroke="#1f77b7" stroke-width="1.15"><circle cx="3" cy="3" r="1.85"/><circle cx="9" cy="3" r="1.85"/><circle cx="15" cy="3" r="1.85"/></g></svg>
<svg class="b" style="left:382px;top:593px;overflow:visible;" width="18" height="18" viewBox="0 0 18 18"><g fill="none" stroke="#1f77b7" stroke-width="1.15" stroke-linejoin="round" stroke-linecap="round"><circle cx="9" cy="9" r="7.6"/><path d="M8 7.6H9.1V11.3Q9.1 12.5 10.3 12.3" stroke-width="1"/></g><circle cx="8.9" cy="5.2" r="0.75" fill="#1f77b7"/></svg>
<span id="t58" class="t" style="left:418.70px;top:594.01px;font-size:13px;line-height:17px;-webkit-text-stroke:0.18px;letter-spacing:-0.334px;">005</span>
<span id="t59" class="t" style="left:499.00px;top:594.01px;font-size:13px;line-height:17px;-webkit-text-stroke:0.18px;letter-spacing:-0.115px;">Dodavatel - školení 6</span>
<span id="t60" class="t" style="left:849.10px;top:594.01px;font-size:13px;line-height:17px;-webkit-text-stroke:0.18px;letter-spacing:0.045px;">45359326</span>
<span id="t61" class="t" style="left:949.50px;top:594.01px;font-size:13px;line-height:17px;-webkit-text-stroke:0.18px;letter-spacing:-0.100px;">18. 5. 2025 20:36</span>
<span id="t62" class="t" style="left:1098.70px;top:594.01px;font-size:13px;line-height:17px;-webkit-text-stroke:0.18px;letter-spacing:-0.136px;">Otevřeno</span>
<svg class="b" style="left:1340.8px;top:595.15px;" width="12" height="12" viewBox="0 0 12 12"><path d="M2.5 2.5L9.5 9.5M9.5 2.5L2.5 9.5" stroke="#cc1f26" stroke-width="2" fill="none"/></svg>
<svg class="b" style="left:1505.8px;top:595.15px;" width="12" height="12" viewBox="0 0 12 12"><path d="M2.5 2.5L9.5 9.5M9.5 2.5L2.5 9.5" stroke="#cc1f26" stroke-width="2" fill="none"/></svg>
<div class="b" style="left:345px;top:639px;width:1222px;height:1px;background:#dedede;"></div>
<svg class="b" style="left:356px;top:624px;overflow:visible;" width="18" height="6" viewBox="0 0 18 6"><g fill="none" stroke="#1f77b7" stroke-width="1.15"><circle cx="3" cy="3" r="1.85"/><circle cx="9" cy="3" r="1.85"/><circle cx="15" cy="3" r="1.85"/></g></svg>
<svg class="b" style="left:382px;top:618px;overflow:visible;" width="18" height="18" viewBox="0 0 18 18"><g fill="none" stroke="#1f77b7" stroke-width="1.15" stroke-linejoin="round" stroke-linecap="round"><circle cx="9" cy="9" r="7.6"/><path d="M8 7.6H9.1V11.3Q9.1 12.5 10.3 12.3" stroke-width="1"/></g><circle cx="8.9" cy="5.2" r="0.75" fill="#1f77b7"/></svg>
<span id="t63" class="t" style="left:418.70px;top:619.01px;font-size:13px;line-height:17px;-webkit-text-stroke:0.18px;letter-spacing:-0.334px;">006</span>
<span id="t64" class="t" style="left:499.00px;top:619.01px;font-size:13px;line-height:17px;-webkit-text-stroke:0.18px;letter-spacing:-0.115px;">Dodavatel - školení 7</span>
<span id="t65" class="t" style="left:849.10px;top:619.01px;font-size:13px;line-height:17px;-webkit-text-stroke:0.18px;letter-spacing:0.045px;">12345678</span>
<span id="t66" class="t" style="left:949.50px;top:619.01px;font-size:13px;line-height:17px;-webkit-text-stroke:0.18px;letter-spacing:-0.100px;">18. 5. 2025 20:38</span>
<span id="t67" class="t" style="left:1098.70px;top:619.01px;font-size:13px;line-height:17px;-webkit-text-stroke:0.18px;letter-spacing:-0.136px;">Otevřeno</span>
<svg class="b" style="left:1340.8px;top:620.15px;" width="12" height="12" viewBox="0 0 12 12"><path d="M2.5 2.5L9.5 9.5M9.5 2.5L2.5 9.5" stroke="#cc1f26" stroke-width="2" fill="none"/></svg>
<svg class="b" style="left:1505.5px;top:620.15px;" width="14" height="12" viewBox="0 0 14 12"><path d="M2.2 6.6L5.4 9.6L11.8 2.6" stroke="#2eab2e" stroke-width="2.1" fill="none"/></svg>
<div class="b" style="left:345px;top:664px;width:1222px;height:1px;background:#dedede;"></div>
<svg class="b" style="left:356px;top:649px;overflow:visible;" width="18" height="6" viewBox="0 0 18 6"><g fill="none" stroke="#1f77b7" stroke-width="1.15"><circle cx="3" cy="3" r="1.85"/><circle cx="9" cy="3" r="1.85"/><circle cx="15" cy="3" r="1.85"/></g></svg>
<svg class="b" style="left:382px;top:643px;overflow:visible;" width="18" height="18" viewBox="0 0 18 18"><g fill="none" stroke="#1f77b7" stroke-width="1.15" stroke-linejoin="round" stroke-linecap="round"><circle cx="9" cy="9" r="7.6"/><path d="M8 7.6H9.1V11.3Q9.1 12.5 10.3 12.3" stroke-width="1"/></g><circle cx="8.9" cy="5.2" r="0.75" fill="#1f77b7"/></svg>
<span id="t68" class="t" style="left:418.70px;top:644.01px;font-size:13px;line-height:17px;-webkit-text-stroke:0.18px;letter-spacing:-0.334px;">007</span>
<span id="t69" class="t" style="left:499.00px;top:644.01px;font-size:13px;line-height:17px;-webkit-text-stroke:0.18px;letter-spacing:-0.115px;">Dodavatel - školení 4</span>
<span id="t70" class="t" style="left:849.10px;top:644.01px;font-size:13px;line-height:17px;-webkit-text-stroke:0.18px;letter-spacing:0.045px;">12345678</span>
<span id="t71" class="t" style="left:949.50px;top:644.01px;font-size:13px;line-height:17px;-webkit-text-stroke:0.18px;letter-spacing:-0.100px;">18. 5. 2025 20:51</span>
<span id="t72" class="t" style="left:1098.70px;top:644.01px;font-size:13px;line-height:17px;-webkit-text-stroke:0.18px;letter-spacing:-0.007px;">Podána po lhůtě</span>
<svg class="b" style="left:1340.8px;top:645.15px;" width="12" height="12" viewBox="0 0 12 12"><path d="M2.5 2.5L9.5 9.5M9.5 2.5L2.5 9.5" stroke="#cc1f26" stroke-width="2" fill="none"/></svg>
<svg class="b" style="left:1505.8px;top:645.15px;" width="12" height="12" viewBox="0 0 12 12"><path d="M2.5 2.5L9.5 9.5M9.5 2.5L2.5 9.5" stroke="#cc1f26" stroke-width="2" fill="none"/></svg>
<div class="b" style="left:345px;top:689px;width:1222px;height:1px;background:#e3e4e6;"></div>
<svg class="b" style="left:356px;top:674px;overflow:visible;" width="18" height="6" viewBox="0 0 18 6"><g fill="none" stroke="#1f77b7" stroke-width="1.15"><circle cx="3" cy="3" r="1.85"/><circle cx="9" cy="3" r="1.85"/><circle cx="15" cy="3" r="1.85"/></g></svg>
<svg class="b" style="left:382px;top:668px;overflow:visible;" width="18" height="18" viewBox="0 0 18 18"><g fill="none" stroke="#1f77b7" stroke-width="1.15" stroke-linejoin="round" stroke-linecap="round"><circle cx="9" cy="9" r="7.6"/><path d="M8 7.6H9.1V11.3Q9.1 12.5 10.3 12.3" stroke-width="1"/></g><circle cx="8.9" cy="5.2" r="0.75" fill="#1f77b7"/></svg>
<span id="t73" class="t" style="left:418.70px;top:669.01px;font-size:13px;line-height:17px;-webkit-text-stroke:0.18px;letter-spacing:-0.334px;">008</span>
<span id="t74" class="t" style="left:499.00px;top:669.01px;font-size:13px;line-height:17px;-webkit-text-stroke:0.18px;letter-spacing:-0.115px;">Dodavatel - školení 6</span>
<span id="t75" class="t" style="left:849.10px;top:669.01px;font-size:13px;line-height:17px;-webkit-text-stroke:0.18px;letter-spacing:0.045px;">45359326</span>
<span id="t76" class="t" style="left:949.50px;top:669.01px;font-size:13px;line-height:17px;-webkit-text-stroke:0.18px;letter-spacing:-0.100px;">18. 5. 2025 20:44</span>
<span id="t77" class="t" style="left:1098.70px;top:669.01px;font-size:13px;line-height:17px;-webkit-text-stroke:0.18px;letter-spacing:-0.136px;">Otevřeno</span>
<svg class="b" style="left:1340.5px;top:670.15px;" width="14" height="12" viewBox="0 0 14 12"><path d="M2.2 6.6L5.4 9.6L11.8 2.6" stroke="#2eab2e" stroke-width="2.1" fill="none"/></svg>
<svg class="b" style="left:1505.8px;top:670.15px;" width="12" height="12" viewBox="0 0 12 12"><path d="M2.5 2.5L9.5 9.5M9.5 2.5L2.5 9.5" stroke="#cc1f26" stroke-width="2" fill="none"/></svg>
<div class="b" style="left:1537px;top:457px;width:30px;height:233px;background:linear-gradient(to right, rgba(0,0,0,0) 0%, rgba(0,0,0,.025) 50%, rgba(0,0,0,.105) 100%);border-bottom-right-radius:8px;"></div>
</section>
<section>
<div class="b" style="left:327px;top:723px;width:1258px;height:423px;background:#fff;box-shadow:2px 2px 4px rgba(0,0,0,.13);"></div>
<div class="b" style="left:335px;top:732.5px;width:126px;height:30.5px;border:1px solid #e0262f;"></div>
<span id="t78" class="t" style="left:339.10px;top:736.01px;font-size:18px;line-height:24px;font-weight:700;color:#2e333a;letter-spacing:-0.717px;">Žádost o účast</span>
<div class="b" style="left:327px;top:764px;width:1258px;height:3px;background:#1c75b4;"></div>
<span id="t79" class="t" style="left:720.50px;top:788.01px;font-size:18px;line-height:20px;-webkit-text-stroke:0.18px;color:#d9232e;letter-spacing:-0.816px;">*</span>
<span id="t80" class="t" style="left:727.90px;top:787.01px;font-size:13px;line-height:17px;-webkit-text-stroke:0.18px;color:#5a5a5a;letter-spacing:0.207px;">Lhůta:</span>
<div class="b" style="left:775px;top:787px;width:224px;height:21px;background:#fdf8c2;border:1px solid #dcd7a6;border-radius:3px;"></div>
<div class="b" style="left:878px;top:789px;width:18px;height:17px;background:#c3d9f5;border-radius:3.5px;"></div>
<svg class="b" style="left:880px;top:790px;overflow:visible;" width="14" height="14" viewBox="0 0 14 14"><g fill="none" stroke="#1b62b3" stroke-width="1.3" stroke-linejoin="round" stroke-linecap="round"><rect x="1.5" y="2.5" width="11" height="10" rx="1.3"/><path d="M1.5 5.5H12.5M4.5 1.5V3.8M9.5 1.5V3.8"/></g></svg>
<div class="b" style="left:1009px;top:787px;width:204px;height:20px;background:#fff;border:1px solid #dcdcdc;border-radius:5px;box-shadow:0 1px 2px rgba(0,0,0,.10);"></div>
<span id="t81" class="t" style="left:1075.30px;top:789.01px;font-size:13px;line-height:17px;-webkit-text-stroke:0.18px;color:#1f77b7;letter-spacing:0.004px;">Výpočet lhůt</span>
<span id="t82" class="t" style="left:638.00px;top:828.01px;font-size:13px;line-height:17px;-webkit-text-stroke:0.18px;color:#5a5a5a;letter-spacing:-0.158px;">Datum a čas otevírání:</span>
<div class="b" style="left:775px;top:828px;width:438px;height:21px;background:#f0f0f0;border:1px solid #c9c9c9;border-radius:3px;"></div>
<svg class="b" style="left:987px;top:831px;overflow:visible;" width="14" height="14" viewBox="0 0 14 14"><g fill="none" stroke="#858585" stroke-width="1.1" stroke-linejoin="round" stroke-linecap="round"><rect x="1.5" y="2.5" width="11" height="10" rx="1.3"/><path d="M1.5 5.5H12.5M4.5 1.5V3.8M9.5 1.5V3.8"/></g></svg>
<div class="b" style="left:775px;top:869px;width:438px;height:21px;background:#e2e2e2;border-radius:5px;"></div>
<span id="t83" class="t" style="left:868.30px;top:872.01px;font-size:13px;line-height:17px;-webkit-text-stroke:0.18px;color:#8c8c8c;letter-spacing:-0.264px;">Odeslání výzvy k podání žádosti o účast v ZŘ</span>
<span id="t84" class="t" style="left:341.90px;top:911.00px;font-size:15px;line-height:20px;font-weight:700;color:#2e333a;letter-spacing:-0.177px;">Přehled podaných žádostí o účast</span>
<div class="b" style="left:342px;top:935px;width:1228px;height:166px;border:3px solid #dcdee1;border-radius:11px;background:#fff;"></div>
<svg class="b" style="left:352px;top:949px;overflow:visible;" width="18" height="18" viewBox="0 0 18 18"><g fill="none" stroke="#a9a9a9" stroke-width="1.15" stroke-linejoin="round" stroke-linecap="round"><path d="M5.2 3.5H3Q1.5 3.5 1.5 5V15Q1.5 16.5 3 16.5H7.8"/><path d="M9.9 3.5H12.1Q13.6 3.5 13.6 5V6.4"/><path d="M5.2 3.6Q5.4 1.2 7.55 1.2Q9.7 1.2 9.9 3.6"/><path d="M4.3 7.6H7.6M4.1 10.4H6.4M4.3 12.9H6.1" stroke-width="1.3"/><circle cx="12.65" cy="12" r="1.1" stroke-width="1.3"/><path d="M12.65 7.50L14.10 9.49L16.55 9.75L15.55 12.00L16.55 14.25L14.10 14.51L12.65 16.50L11.20 14.51L8.75 14.25L9.75 12.00L8.75 9.75L11.20 9.49Z"/></g><circle cx="7.55" cy="3.5" r="0.75" fill="#a9a9a9"/></svg>
<span id="t85" class="t" style="left:372.90px;top:950.01px;font-size:13px;line-height:17px;-webkit-text-stroke:0.18px;color:#9a9a9a;letter-spacing:-0.174px;">Evidovat žádost o účast</span>
<div class="b" style="left:514px;top:949px;width:1.25px;height:18px;background:#1f77b7;"></div>
<svg class="b" style="left:522px;top:949px;overflow:visible;" width="18" height="18" viewBox="0 0 18 18"><g fill="none" stroke="#1f77b7" stroke-width="1.15" stroke-linejoin="round" stroke-linecap="round"><path d="M4.5 5.3V2.3Q4.5 1.5 5.3 1.5H13.7Q14.5 1.5 14.5 2.3V5.3"/><path d="M4.5 12.5H2.5Q1.5 12.5 1.5 11.5V6.5Q1.5 5.5 2.5 5.5H16.5Q17.5 5.5 17.5 6.5V11.5Q17.5 12.5 16.5 12.5H14.5"/><rect x="4.5" y="9.5" width="10" height="7" rx="0.6"/><path d="M6.2 11.6H12M6.2 13.7H10.4M3.8 7.6H4.6"/></g></svg>
<svg class="b" style="left:542px;top:954px;overflow:visible;" width="12" height="12" viewBox="0 0 12 12"><path d="M1.5 1.5H7.8 L4.65 6Z" fill="none" stroke="#1f77b7" stroke-width="1.2" stroke-linejoin="round"/></svg>
<div class="b" style="left:561px;top:949px;width:1.25px;height:18px;background:#1f77b7;"></div>
<svg class="b" style="left:570px;top:949px;overflow:visible;" width="18" height="18" viewBox="0 0 18 18"><g fill="none" stroke="#1f77b7" stroke-width="1.15" stroke-linejoin="round" stroke-linecap="round"><path d="M5.2 6.5H3.5Q2.5 6.5 2.5 7.5V15.5Q2.5 16.5 3.5 16.5H14.5Q15.5 16.5 15.5 15.5V7.5Q15.5 6.5 14.5 6.5H12.8"/><path d="M9 8.8V1.4M6.2 4L9 1.2L11.8 4"/></g></svg>
<svg class="b" style="left:589px;top:954px;overflow:visible;" width="12" height="12" viewBox="0 0 12 12"><path d="M1.5 1.5H7.8 L4.65 6Z" fill="none" stroke="#1f77b7" stroke-width="1.2" stroke-linejoin="round"/></svg>
<div class="b" style="left:609px;top:949px;width:1.25px;height:18px;background:#1f77b7;"></div>
<svg class="b" style="left:1485px;top:949px;overflow:visible;" width="18" height="18" viewBox="0 0 18 18"><path d="M2.2 1.5H15.8Q17.2 1.5 16.3 2.6L11.2 8.6V14.3L7.6 16.6V8.6L1.7 2.6Q0.8 1.5 2.2 1.5Z" fill="none" stroke="#1f77b7" stroke-width="1.2" stroke-linejoin="round"/></svg>
<div class="b" style="left:1509px;top:949px;width:1.25px;height:18px;background:#1f77b7;"></div>
<svg class="b" style="left:1521px;top:954px;overflow:visible;" width="12" height="12" viewBox="0 0 12 12"><path d="M1.5 1.5H7.8 L4.65 6Z" fill="none" stroke="#1f77b7" stroke-width="1.2" stroke-linejoin="round"/></svg>
<span id="t86" class="t" style="left:1537.70px;top:952.01px;font-size:13px;line-height:17px;-webkit-text-stroke:0.18px;color:#1f77b7;letter-spacing:-0.369px;">Vše</span>
<div class="b" style="left:1566px;top:949px;width:1.25px;height:18px;background:#1f77b7;"></div>
<div class="b" style="left:345px;top:977px;width:1222px;height:1px;background:#e6e6e6;"></div>
<div class="b" style="left:345px;top:978px;width:1222px;height:32px;background:#f2f2f2;"></div>
<div class="b" style="left:345px;top:1010px;width:1222px;height:1px;background:#cfcfcf;"></div>
<div class="b" style="left:392px;top:978px;width:1px;height:32px;background:#dcdcdc;"></div>
<div class="b" style="left:472px;top:978px;width:1px;height:32px;background:#dcdcdc;"></div>
<div class="b" style="left:822px;top:978px;width:1px;height:32px;background:#dcdcdc;"></div>
<div class="b" style="left:922px;top:978px;width:1px;height:32px;background:#dcdcdc;"></div>
<div class="b" style="left:1072px;top:978px;width:1px;height:32px;background:#dcdcdc;"></div>
<div class="b" style="left:1222px;top:978px;width:1px;height:32px;background:#dcdcdc;"></div>
<div class="b" style="left:1362px;top:978px;width:1px;height:32px;background:#dcdcdc;"></div>
<div class="b" style="left:1566px;top:978px;width:1px;height:32px;background:#dcdcdc;"></div>
<svg class="b" style="left:360px;top:985px;overflow:visible;" width="18" height="18" viewBox="0 0 18 18"><g fill="none" stroke="#4a4a4a" stroke-width="1.05"><rect x="1.5" y="1.5" width="15" height="15" rx="1"/><path d="M4 6.5H9.6M12.6 6.5H14M4 11.5H5.6M8.6 11.5H14"/><circle cx="11.1" cy="6.5" r="1.5"/><circle cx="7.1" cy="11.5" r="1.5"/></g></svg>
<span id="t87" class="t" style="left:400.70px;top:986.01px;font-size:13px;line-height:17px;font-weight:700;letter-spacing:-0.619px;">Číslo</span>
<svg class="b" style="left:435px;top:986.6px;" width="14" height="16" viewBox="0 0 14 16"><path d="M7 14V2.4M2.2 7L7 2.2L11.8 7" fill="none" stroke="#111" stroke-width="1.3"/></svg>
<svg class="b" style="left:454px;top:990px;overflow:visible;" width="12" height="12" viewBox="0 0 12 12"><path d="M1.5 1.5H7.4 L4.45 6.6Z" fill="none" stroke="#505050" stroke-width="1.05" stroke-linejoin="round"/></svg>
<span id="t88" class="t" style="left:480.90px;top:986.01px;font-size:13px;line-height:17px;-webkit-text-stroke:0.18px;color:#5a5a5a;letter-spacing:-0.261px;">Název dodavatele</span>
<svg class="b" style="left:804px;top:990px;overflow:visible;" width="12" height="12" viewBox="0 0 12 12"><path d="M1.5 1.5H7.4 L4.45 6.6Z" fill="none" stroke="#505050" stroke-width="1.05" stroke-linejoin="round"/></svg>
<span id="t89" class="t" style="left:830.80px;top:986.01px;font-size:13px;line-height:17px;-webkit-text-stroke:0.18px;color:#5a5a5a;letter-spacing:-0.808px;">IČO</span>
<svg class="b" style="left:904px;top:990px;overflow:visible;" width="12" height="12" viewBox="0 0 12 12"><path d="M1.5 1.5H7.4 L4.45 6.6Z" fill="none" stroke="#505050" stroke-width="1.05" stroke-linejoin="round"/></svg>
<span id="t90" class="t" style="left:930.70px;top:986.01px;font-size:13px;line-height:17px;-webkit-text-stroke:0.18px;color:#5a5a5a;letter-spacing:-0.181px;">Datum podání</span>
<svg class="b" style="left:1054px;top:990px;overflow:visible;" width="12" height="12" viewBox="0 0 12 12"><path d="M1.5 1.5H7.4 L4.45 6.6Z" fill="none" stroke="#505050" stroke-width="1.05" stroke-linejoin="round"/></svg>
<span id="t91" class="t" style="left:1080.50px;top:986.01px;font-size:13px;line-height:17px;-webkit-text-stroke:0.18px;color:#5a5a5a;letter-spacing:-0.179px;">Stav</span>
<svg class="b" style="left:1204px;top:990px;overflow:visible;" width="12" height="12" viewBox="0 0 12 12"><path d="M1.5 1.5H7.4 L4.45 6.6Z" fill="none" stroke="#505050" stroke-width="1.05" stroke-linejoin="round"/></svg>
<span id="t92" class="t" style="left:1230.50px;top:986.01px;font-size:13px;line-height:17px;-webkit-text-stroke:0.18px;color:#5a5a5a;letter-spacing:-0.220px;">Podepsána</span>
<svg class="b" style="left:1344px;top:990px;overflow:visible;" width="12" height="12" viewBox="0 0 12 12"><path d="M1.5 1.5H7.4 L4.45 6.6Z" fill="none" stroke="#505050" stroke-width="1.05" stroke-linejoin="round"/></svg>
<span id="t93" class="t" style="left:1370.60px;top:986.01px;font-size:13px;line-height:17px;-webkit-text-stroke:0.18px;color:#5a5a5a;letter-spacing:-0.067px;">Listinná podoba</span>
<svg class="b" style="left:1548px;top:990px;overflow:visible;" width="12" height="12" viewBox="0 0 12 12"><path d="M1.5 1.5H7.4 L4.45 6.6Z" fill="none" stroke="#505050" stroke-width="1.05" stroke-linejoin="round"/></svg>
<svg class="b" style="left:980px;top:1038px;" width="28" height="13" viewBox="0 0 28 13"><path d="M2 3.6H7.4Q9.2 7 14 7Q18.8 7 20.6 3.6H26V10.6Q26 11.6 25 11.6H3Q2 11.6 2 10.6Z" fill="none" stroke="#444" stroke-width="1.3" stroke-linejoin="round"/></svg>
<span id="t94" class="t" style="left:858.50px;top:1061.01px;font-size:13px;line-height:17px;-webkit-text-stroke:0.18px;color:#5a5a5a;letter-spacing:-0.102px;">Žádné záznamy. Nebyla učiněna žádná podání.</span>
</section>
<nav aria-label="tabs">
<svg class="b" style="left:1050.2px;top:128px;" width="245" height="35" viewBox="0 0 245 35"><defs><filter id="sh1056" x="-10%" y="-30%" width="125%" height="160%"><feGaussianBlur stdDeviation="1.6"/></filter></defs><path d="M6 6.5H218.9 L247.9 35.5H6Z" fill="#000" opacity=".30" filter="url(#sh1056)" transform="translate(1.5 -1)"/><path d="M6 6H218.9 L247.9 35H6Z" fill="#1c75b4"/></svg>
<span id="t95" class="t" style="left:1074.60px;top:140.01px;font-size:14px;line-height:18px;font-weight:700;color:#fff;letter-spacing:-0.425px;">Výsledek zadávacího postupu</span>
<svg class="b" style="left:944.2px;top:128px;" width="136.9" height="35" viewBox="0 0 136.9 35"><defs><filter id="sh950" x="-10%" y="-30%" width="125%" height="160%"><feGaussianBlur stdDeviation="1.6"/></filter></defs><path d="M6 6.5H99.9 L128.9 35.5H6Z" fill="#000" opacity=".30" filter="url(#sh950)" transform="translate(1.5 -1)"/><path d="M6 6H99.9 L128.9 35H6Z" fill="#1c75b4"/></svg>
<span id="t96" class="t" style="left:968.80px;top:140.01px;font-size:14px;line-height:18px;font-weight:700;color:#fff;letter-spacing:-0.438px;">Hodnocení</span>
<svg class="b" style="left:605px;top:128px;" width="191.2" height="35" viewBox="0 0 191.2 35"><defs><filter id="sh611" x="-10%" y="-30%" width="125%" height="160%"><feGaussianBlur stdDeviation="1.6"/></filter></defs><path d="M6 6.5H154.2 L183.2 35.5H6Z" fill="#000" opacity=".30" filter="url(#sh611)" transform="translate(1.5 -1)"/><path d="M6 6H154.2 L183.2 35H6Z" fill="#1c75b4"/></svg>
<span id="t97" class="t" style="left:629.70px;top:140.01px;font-size:14px;line-height:18px;font-weight:700;color:#fff;letter-spacing:-0.432px;">Zadávací podmínky</span>
<svg class="b" style="left:451px;top:128px;" width="184.7" height="35" viewBox="0 0 184.7 35"><defs><filter id="sh457" x="-10%" y="-30%" width="125%" height="160%"><feGaussianBlur stdDeviation="1.6"/></filter></defs><path d="M6 6.5H147.7 L176.7 35.5H6Z" fill="#000" opacity=".30" filter="url(#sh457)" transform="translate(1.5 -1)"/><path d="M6 6H147.7 L176.7 35H6Z" fill="#1c75b4"/></svg>
<span id="t98" class="t" style="left:475.70px;top:140.01px;font-size:14px;line-height:18px;font-weight:700;color:#fff;letter-spacing:-0.427px;">Kritéria hodnocení</span>
<svg class="b" style="left:321px;top:128px;" width="160.5" height="35" viewBox="0 0 160.5 35"><defs><filter id="sh327" x="-10%" y="-30%" width="125%" height="160%"><feGaussianBlur stdDeviation="1.6"/></filter></defs><path d="M6 6.5H123.5 L152.5 35.5H6Z" fill="#000" opacity=".30" filter="url(#sh327)" transform="translate(1.5 -1)"/><path d="M6 6H123.5 L152.5 35H6Z" fill="#1c75b4"/></svg>
<span id="t99" class="t" style="left:345.40px;top:140.01px;font-size:14px;line-height:18px;font-weight:700;color:#fff;letter-spacing:-0.304px;">Základní údaje</span>
<svg class="b" style="left:764px;top:126px;" width="212" height="37" viewBox="0 0 212 37"><defs><filter id="sha" x="-10%" y="-30%" width="125%" height="160%"><feGaussianBlur stdDeviation="1.6"/></filter></defs><path d="M7 6.5H174 L205 37.5H7Z" fill="#000" opacity=".17" filter="url(#sha)" transform="translate(1.5 -1)"/><path d="M7 6H174 L205 37H7Z" fill="#fff"/></svg>
<span id="t100" class="t" style="left:791.00px;top:138.00px;font-size:15px;line-height:19px;font-weight:700;letter-spacing:-0.460px;">Podání účastníků ZP</span>
</nav>
</main>
</body></html>
